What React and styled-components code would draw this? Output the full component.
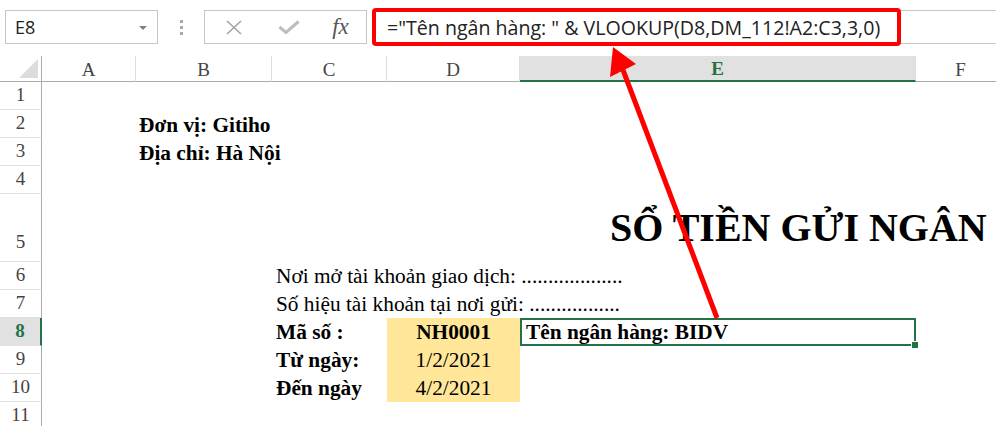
import React from 'react'
import styled, { createGlobalStyle } from 'styled-components'

const columns = [
  { key: 'A', width: 94 },
  { key: 'B', width: 136 },
  { key: 'C', width: 115 },
  { key: 'D', width: 133 },
  { key: 'E', width: 396 },
  { key: 'F', width: 90 },
]

// row heights, index 0 = row 1
const rows = [
  { h: 28, pad: 3 },
  { h: 28, pad: 3 },
  { h: 28, pad: 3 },
  { h: 28, pad: 3 },
  { h: 68, pad: 8 },
  { h: 28, pad: 3 },
  { h: 28, pad: 3 },
  { h: 28, pad: 3 },
  { h: 28, pad: 3 },
  { h: 28, pad: 3 },
  { h: 28, pad: 3 },
]

const ACTIVE_COL = 'E'
const ACTIVE_ROW = 8

export default function App() {
  return (
    <>
      <GlobalStyle />
      <Screen>
        <Toolbar>
          <NameBox>
            <span>E8</span>
            <Caret />
          </NameBox>
          <Grip>
            <i />
            <i />
            <i />
          </Grip>
          <FormulaButtons>
            <ToolButton>
              <svg width="16" height="15" viewBox="0 0 16 15">
                <path d="M1 1 L15 14 M15 1 L1 14" stroke="#a3a3a3" strokeWidth="1.6" fill="none" />
              </svg>
            </ToolButton>
            <ToolButton>
              <svg width="22" height="14" viewBox="0 0 22 14">
                <path d="M1.5 7 L8 12.5 L20.5 1.5" stroke="#bdbdbd" strokeWidth="3" fill="none" />
              </svg>
            </ToolButton>
            <ToolButton>
              <Fx>fx</Fx>
            </ToolButton>
          </FormulaButtons>
          <FormulaInput>
            <FormulaText>="Tên ngân hàng: " &amp; VLOOKUP(D8,DM_112!A2:C3,3,0)</FormulaText>
            <Callout />
          </FormulaInput>
        </Toolbar>

        <Sheet>
          <Corner>
            <CornerMark />
          </Corner>
          {columns.map((c) => (
            <ColHeader key={c.key} $active={c.key === ACTIVE_COL}>
              {c.key}
            </ColHeader>
          ))}
          {rows.map((r, i) => (
            <RowHeader key={i} $row={i + 2} $pad={r.pad} $active={i + 1 === ACTIVE_ROW}>
              {i + 1}
            </RowHeader>
          ))}

          <Cell $row={3} $col={3} $bold $valign="flex-end" $indent={3}>
            Đơn vị: Gitiho
          </Cell>
          <Cell $row={4} $col={3} $bold $valign="flex-end" $indent={3}>
            Địa chỉ: Hà Nội
          </Cell>

          <Title $row={6} $col={6}>SỔ TIỀN GỬI NGÂN</Title>

          <Cell $row={7} $col={4} $indent={4}>
            Nơi mở tài khoản giao dịch: ...................
          </Cell>
          <Cell $row={8} $col={4} $indent={4}>
            Số hiệu tài khoản tại nơi gửi: .................
          </Cell>

          <Cell $row={9} $col={4} $bold $indent={4}>
            Mã số :
          </Cell>
          <Cell $row={10} $col={4} $bold $indent={4}>
            Từ ngày:
          </Cell>
          <Cell $row={11} $col={4} $bold $indent={4}>
            Đến ngày
          </Cell>

          <Cell $row={9} $col={5} $bold $fill="#ffe699" $justify="center">
            NH0001
          </Cell>
          <Cell $row={10} $col={5} $fill="#ffe699" $justify="center">
            1/2/2021
          </Cell>
          <Cell $row={11} $col={5} $fill="#ffe699" $justify="center">
            4/2/2021
          </Cell>

          <SelectedCell $row={9} $col={6} $bold $indent={4}>
            Tên ngân hàng: BIDV
            <FillHandle />
          </SelectedCell>
        </Sheet>

        <Annotation viewBox="0 0 996 426" width="996" height="426">
          <line x1="717" y1="318" x2="623" y2="70" stroke="#ff0000" strokeWidth="5" />
          <polygon points="613,47 636,64 610,77" fill="#ff0000" />
        </Annotation>
      </Screen>
    </>
  )
}

const GlobalStyle = createGlobalStyle`
  html, body {
    margin: 0;
    padding: 0;
    background: #fff;
  }
  body {
    width: 996px;
    height: 426px;
    overflow: hidden;
    font-family: 'Liberation Serif', 'Times New Roman', serif;
    color: #000;
  }
`

const Screen = styled.div`
  position: relative;
  width: 996px;
  height: 426px;
  overflow: hidden;
  background: #fff;
`

const Toolbar = styled.div`
  display: flex;
  align-items: flex-start;
  height: 56px;
  padding-top: 10px;
  box-sizing: border-box;
`

const NameBox = styled.div`
  display: flex;
  align-items: center;
  justify-content: space-between;
  margin-left: 5px;
  width: 153px;
  height: 34px;
  padding: 0 10px 0 9px;
  box-sizing: border-box;
  border: 1px solid #c6c6c6;
  font-family: 'Open Sans', 'Noto Sans', sans-serif;
  font-size: 18px;
  color: #222;
`

const Caret = styled.span`
  width: 0;
  height: 0;
  margin-top: 2px;
  border-left: 4px solid transparent;
  border-right: 4px solid transparent;
  border-top: 4px solid #808080;
`

const Grip = styled.div`
  display: flex;
  flex-direction: column;
  align-items: center;
  justify-content: center;
  gap: 3px;
  width: 46px;
  height: 34px;
  i {
    display: block;
    width: 3px;
    height: 3px;
    background: #a8a8a8;
  }
`

const FormulaButtons = styled.div`
  display: grid;
  grid-template-columns: 58px 52px 51px;
  align-items: center;
  width: 163px;
  height: 34px;
  box-sizing: border-box;
  border: 1px solid #c6c6c6;
`

const ToolButton = styled.div`
  display: flex;
  align-items: center;
  justify-content: center;
`

const Fx = styled.span`
  font-family: 'Liberation Serif', serif;
  font-style: italic;
  font-size: 23px;
  color: #555;
  line-height: 1;
  margin-top: -2px;
`

const FormulaInput = styled.div`
  position: relative;
  display: flex;
  align-items: center;
  flex: 1;
  margin-left: 5px;
  height: 34px;
  padding-left: 15px;
  box-sizing: border-box;
  border-top: 1px solid #c6c6c6;
  border-bottom: 1px solid #c6c6c6;
`

const FormulaText = styled.span`
  font-family: 'Open Sans', 'Noto Sans', sans-serif;
  font-size: 19.6px;
  color: #222;
  white-space: nowrap;
`

const Callout = styled.div`
  position: absolute;
  left: 0;
  top: -3px;
  width: 529px;
  height: 38px;
  box-sizing: border-box;
  border: 4px solid #ff0000;
  border-radius: 4px;
`

const Sheet = styled.div`
  display: grid;
  grid-template-columns: 42px ${columns.map((c) => `${c.width}px`).join(' ')};
  grid-template-rows: 26px ${rows.map((r) => `${r.h}px`).join(' ')};
  width: max-content;
`

const Corner = styled.div`
  display: flex;
  align-items: flex-end;
  justify-content: flex-end;
  padding: 0 3px 3px 0;
  box-sizing: border-box;
  border-right: 1px solid #ababab;
  border-bottom: 1px solid #ababab;
`

const CornerMark = styled.span`
  width: 0;
  height: 0;
  border-left: 19px solid transparent;
  border-bottom: 19px solid #dcdcdc;
`

const ColHeader = styled.div`
  display: flex;
  align-items: center;
  justify-content: center;
  box-sizing: border-box;
  border-right: 1px solid #dedede;
  border-bottom: ${(p) => (p.$active ? '2px solid #217346' : '1px solid #ababab')};
  background: ${(p) => (p.$active ? '#e1e1e1' : '#fff')};
  color: ${(p) => (p.$active ? '#217346' : '#444')};
  font-weight: ${(p) => (p.$active ? 700 : 400)};
  font-size: 19px;
  padding-top: 2px;
`

const RowHeader = styled.div`
  grid-column: 1;
  grid-row: ${(p) => p.$row};
  display: flex;
  align-items: flex-end;
  justify-content: center;
  padding-bottom: ${(p) => p.$pad}px;
  box-sizing: border-box;
  border-right: ${(p) => (p.$active ? '2px solid #217346' : '1px solid #ababab')};
  border-bottom: 1px solid #e1e1e1;
  background: ${(p) => (p.$active ? '#e1e1e1' : '#fff')};
  color: ${(p) => (p.$active ? '#217346' : '#444')};
  font-weight: ${(p) => (p.$active ? 700 : 400)};
  font-size: 19px;
  line-height: 1.15;
`

const Cell = styled.div`
  grid-row: ${(p) => p.$row};
  grid-column: ${(p) => p.$col};
  display: flex;
  align-items: ${(p) => p.$valign || 'center'};
  justify-content: ${(p) => p.$justify || 'flex-start'};
  padding-left: ${(p) => p.$indent || 0}px;
  box-sizing: border-box;
  background: ${(p) => p.$fill || 'transparent'};
  font-size: 21.33px;
  font-weight: ${(p) => (p.$bold ? 700 : 400)};
  line-height: 1.15;
  white-space: nowrap;
`

const Title = styled(Cell)`
  padding-left: 90px;
  font-size: 40px;
  font-weight: 700;
`

const SelectedCell = styled(Cell)`
  position: relative;
  border: 2px solid #217346;
  padding-left: 4px;
`

const FillHandle = styled.span`
  position: absolute;
  right: -5px;
  bottom: -5px;
  width: 6px;
  height: 6px;
  background: #217346;
  border: 1px solid #fff;
`

const Annotation = styled.svg`
  position: absolute;
  top: 0;
  left: 0;
  pointer-events: none;
`
